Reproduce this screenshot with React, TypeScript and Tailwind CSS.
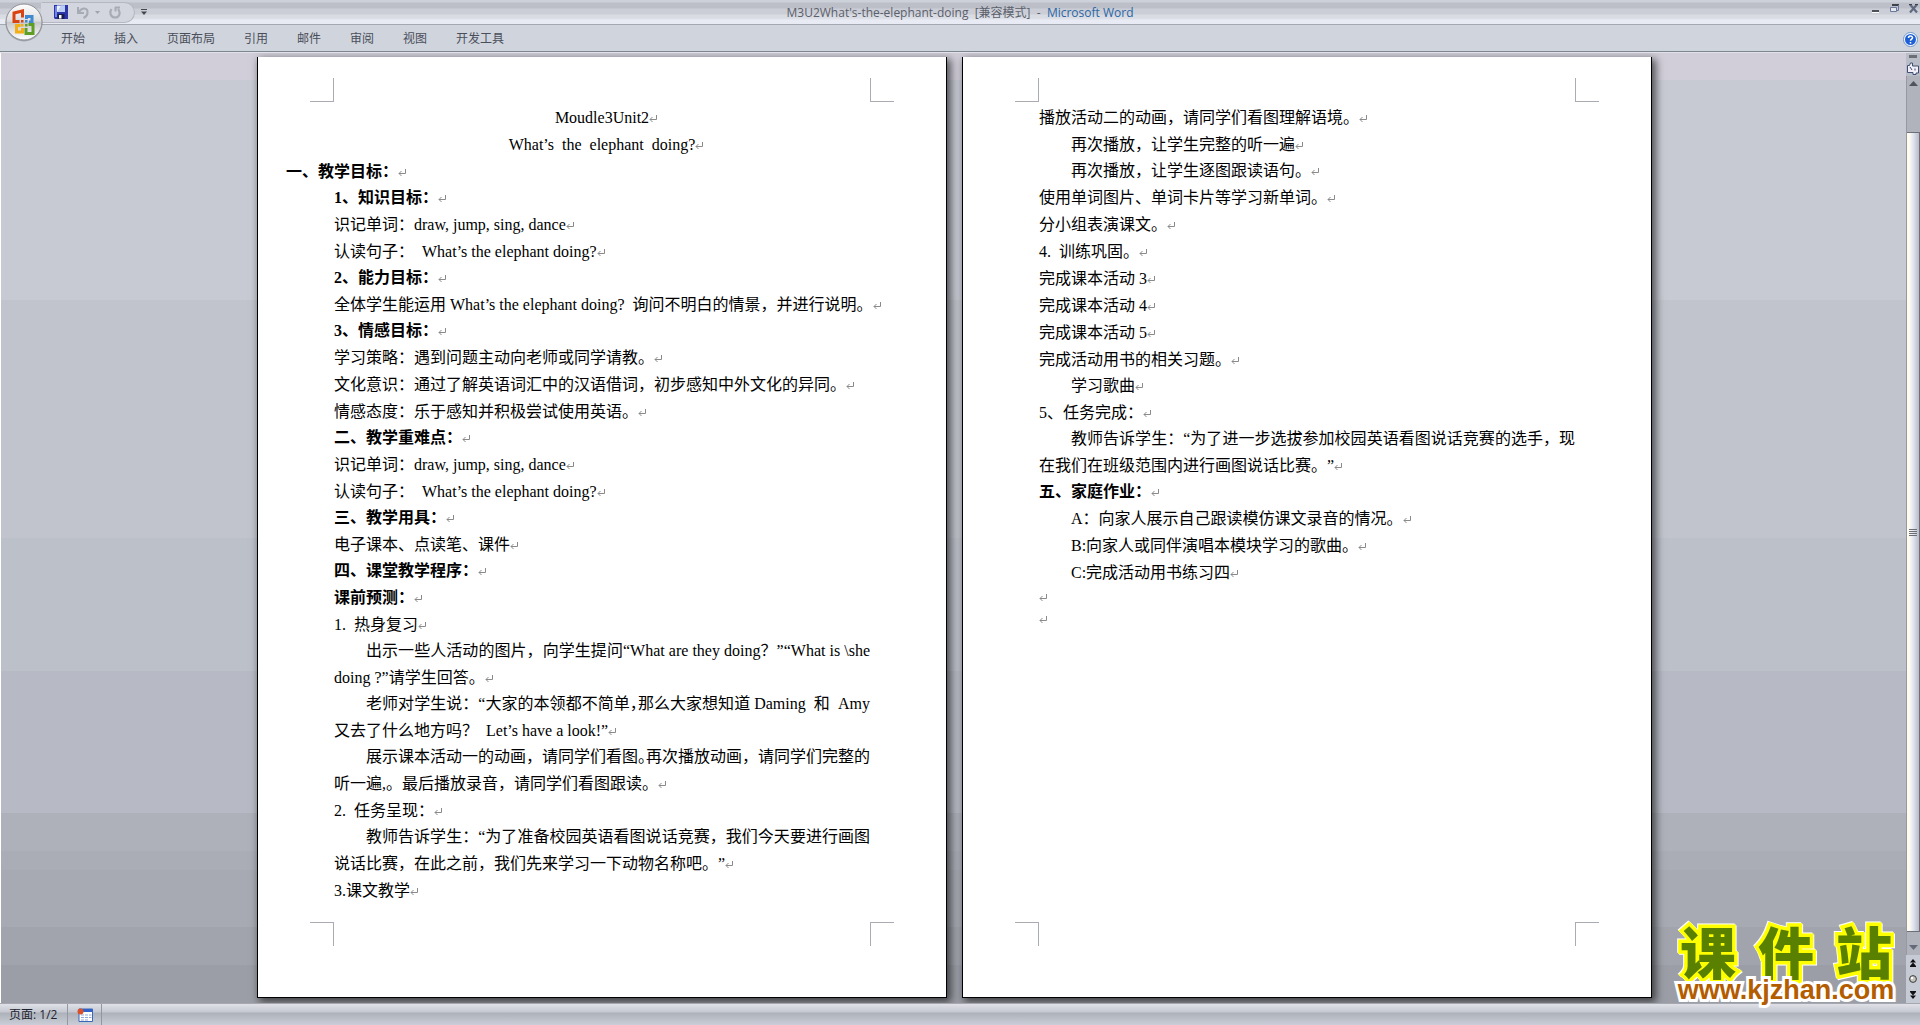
import { ReactNode } from 'react'

type Line = {
  text: ReactNode
  kind?: 'title' | 'lead' | 'heading' | 'subheading' | 'indent' | 'item' | 'blank'
  justify?: boolean
  mark?: boolean
}

const TABS = ['开始', '插入', '页面布局', '引用', '邮件', '审阅', '视图', '开发工具']

const PAGE_ONE: Line[] = [
  { text: 'Moudle3Unit2', kind: 'title' },
  { text: 'What’s  the  elephant  doing?', kind: 'title' },
  { text: '一、教学目标：', kind: 'lead' },
  { text: '1、知识目标：', kind: 'heading' },
  { text: '识记单词：draw, jump, sing, dance' },
  { text: '认读句子：  What’s the elephant doing?' },
  { text: '2、能力目标：', kind: 'heading' },
  { text: '全体学生能运用 What’s the elephant doing?  询问不明白的情景，并进行说明。' },
  { text: '3、情感目标：', kind: 'heading' },
  { text: '学习策略：遇到问题主动向老师或同学请教。' },
  { text: '文化意识：通过了解英语词汇中的汉语借词，初步感知中外文化的异同。' },
  { text: '情感态度：乐于感知并积极尝试使用英语。' },
  { text: '二、教学重难点：', kind: 'heading' },
  { text: '识记单词：draw, jump, sing, dance' },
  { text: '认读句子：  What’s the elephant doing?' },
  { text: '三、教学用具：', kind: 'heading' },
  { text: '电子课本、点读笔、课件' },
  { text: '四、课堂教学程序：', kind: 'heading' },
  { text: '课前预测：', kind: 'subheading' },
  { text: '1.  热身复习' },
  {
    text: '出示一些人活动的图片，向学生提问“What are they doing？”“What is \\she',
    kind: 'indent',
    justify: true,
    mark: false,
  },
  { text: 'doing ?”请学生回答。' },
  {
    text: (
      <>
        老师对学生说：“大家的本领都不简单<HalfWidth>，</HalfWidth>那么大家想知道 Daming  和  Amy
      </>
    ),
    kind: 'indent',
    justify: true,
    mark: false,
  },
  { text: '又去了什么地方吗？  Let’s have a look!”' },
  {
    text: (
      <>
        展示课本活动一的动画，请同学们看图<HalfWidth>。</HalfWidth>再次播放动画，请同学们完整的
      </>
    ),
    kind: 'indent',
    justify: true,
    mark: false,
  },
  { text: '听一遍,。最后播放录音，请同学们看图跟读。' },
  { text: '2.  任务呈现：' },
  {
    text: '教师告诉学生：“为了准备校园英语看图说话竞赛，我们今天要进行画图',
    kind: 'indent',
    justify: true,
    mark: false,
  },
  { text: '说话比赛，在此之前，我们先来学习一下动物名称吧。”' },
  { text: '3.课文教学' },
]

const PAGE_TWO: Line[] = [
  { text: '播放活动二的动画，请同学们看图理解语境。' },
  { text: '再次播放，让学生完整的听一遍', kind: 'item' },
  { text: '再次播放，让学生逐图跟读语句。', kind: 'indent' },
  { text: '使用单词图片、单词卡片等学习新单词。' },
  { text: '分小组表演课文。' },
  { text: '4.  训练巩固。' },
  { text: '完成课本活动 3' },
  { text: '完成课本活动 4' },
  { text: '完成课本活动 5' },
  { text: '完成活动用书的相关习题。' },
  { text: '学习歌曲', kind: 'indent' },
  { text: '5、任务完成：' },
  {
    text: '教师告诉学生：“为了进一步选拔参加校园英语看图说话竞赛的选手，现',
    kind: 'indent',
    justify: true,
    mark: false,
  },
  { text: '在我们在班级范围内进行画图说话比赛。”' },
  { text: '五、家庭作业：', kind: 'heading' },
  { text: 'A：向家人展示自己跟读模仿课文录音的情况。', kind: 'item' },
  { text: 'B:向家人或同伴演唱本模块学习的歌曲。', kind: 'item' },
  { text: 'C:完成活动用书练习四', kind: 'item' },
  { text: '', kind: 'blank' },
  { text: '', kind: 'blank' },
]

const LINE_STYLES = {
  body: 'leading-[27px]',
  title: 'text-center leading-[27px]',
  lead: '-ml-12 font-bold leading-[27px]',
  heading: 'font-bold leading-[26px]',
  subheading: 'font-bold leading-[27px]',
  indent: 'pl-8 leading-[26px]',
  item: 'pl-8 leading-[27px]',
  blank: 'leading-[22px]',
}

function HalfWidth({ children }: { children: ReactNode }) {
  return <span className="[font-feature-settings:'halt']">{children}</span>
}

function ReturnMark() {
  return (
    <svg className="-mr-2 inline-block align-baseline" width="8" height="8" viewBox="0 0 8 8" fill="none" stroke="#8a8a8a" aria-hidden="true">
      <path d="M7.5 0v4.5H1" />
      <path d="M3.5 2L1 4.5L3.5 7" />
    </svg>
  )
}

function Corner({ className }: { className: string }) {
  return <div className={`size-6 border-[#a9acb1] ${className}`} />
}

function Page({ lines }: { lines: Line[] }) {
  return (
    <article className="flex w-[690px] shrink-0 flex-col border border-t-0 border-black bg-white px-[52px] pt-[21px] pb-[51px] shadow-[3px_3px_8px_1px_rgba(0,0,0,0.6)]">
      <div className="flex justify-between">
        <Corner className="border-r border-b" />
        <Corner className="border-b border-l" />
      </div>
      <div className="flex-1 px-6 pt-0.5">
        {lines.map((line, i) => (
          <p key={i} className={`whitespace-pre ${LINE_STYLES[line.kind ?? 'body']} ${line.justify ? '[text-align-last:justify]' : ''}`}>
            {line.text}
            {line.mark !== false && <ReturnMark />}
          </p>
        ))}
      </div>
      <div className="flex justify-between">
        <Corner className="border-t border-r" />
        <Corner className="border-t border-l" />
      </div>
    </article>
  )
}

function OfficeOrb() {
  return (
    <svg width="40" height="40" viewBox="0 0 40 40" aria-hidden="true">
      <defs>
        <linearGradient id="orb" x1="0" y1="0" x2="0" y2="1">
          <stop offset="0" stopColor="#ffffff" />
          <stop offset="0.48" stopColor="#dcdcde" />
          <stop offset="0.5" stopColor="#c6c7cb" />
          <stop offset="1" stopColor="#ffffff" />
        </linearGradient>
      </defs>
      <circle cx="20" cy="21" r="18.5" fill="#80838a" opacity="0.6" />
      <circle cx="20" cy="20" r="18" fill="url(#orb)" stroke="#8c8f96" />
      <g fill="none" strokeWidth="3">
        <path d="M15.5 19.5h-5.500v-8.500l8.500-2v6.500" stroke="#d8430f" />
        <path d="M22.500 17v-2.500h5.500v5.500h-3" stroke="#3d8ad0" />
        <path d="M16.500 23.500h-4v6.500h6v-4" stroke="#f2ae15" />
        <path d="M22 26v5.500h7v-9h-4.500" stroke="#5f9e25" />
      </g>
      <g>
        <rect x="17" y="18" width="2.500" height="2.500" fill="#d8430f" />
        <rect x="21" y="18" width="2.500" height="2.500" fill="#3d8ad0" />
        <rect x="17" y="22" width="2.500" height="2.500" fill="#f2ae15" />
        <rect x="21" y="22" width="2.500" height="2.500" fill="#5f9e25" />
      </g>
    </svg>
  )
}

function QuickAccess() {
  return (
    <div className="flex h-[22px] items-center pl-[41px]">
      <div className="flex h-[21px] items-center rounded-r-full border border-[#b4b7c0] border-l-transparent bg-[#d3d6de] pr-[13px] pl-3">
        <button type="button" aria-label="保存">
          <svg className="block" width="14" height="14" viewBox="0 0 14 14">
            <path d="M0 0h14v14H1L0 13z" fill="#2b35a8" />
            <path d="M1 1h2v11H1z" fill="#6f86e6" />
            <path d="M3 0.500h8v6.500H3z" fill="#eef3ff" />
            <path d="M7 0.500h4v6.500L3 7z" fill="#b9cdf5" />
            <path d="M3.500 9h7v5h-7z" fill="#181c50" />
            <path d="M5 10h2.500v3.500H5z" fill="#fff" />
          </svg>
        </button>
        <button type="button" aria-label="撤消" className="ml-[9px]">
          <svg className="block" width="12" height="13" viewBox="0 0 12 13" fill="none" stroke="#a7abb5" strokeWidth="2.200">
            <path d="M1 1v6h6" strokeWidth="2" />
            <path d="M2 6C5 1 11 1.500 10.500 6.500C10.500 9 8.500 11 6.500 12" />
          </svg>
        </button>
        <button type="button" aria-label="撤消选项" className="ml-1.5">
          <svg className="block" width="5" height="3" viewBox="0 0 5 3">
            <path d="M0 0h5L2.500 3z" fill="#9ea2ab" />
          </svg>
        </button>
        <button type="button" aria-label="重复" className="ml-[9px]">
          <svg className="block" width="12" height="13" viewBox="0 0 12 13" fill="none" stroke="#a7abb5" strokeWidth="2.200">
            <path d="M2.500 3C0 7 2 11.500 6 11.500C10.500 11.500 12 6.500 9 3" />
            <path d="M6.500 1v4.500M6 1.500h5" strokeWidth="2" />
          </svg>
        </button>
      </div>
      <button type="button" aria-label="自定义快速访问工具栏" className="ml-1.5">
        <svg className="block" width="6" height="6" viewBox="0 0 6 6">
          <path d="M0 0h6v1H0zM0 2.500h6L3 6z" fill="#44474e" />
        </svg>
      </button>
    </div>
  )
}

function WindowButtons() {
  return (
    <div className="flex items-center justify-end gap-2.5 pr-0.5 pb-2">
      <button type="button" aria-label="最小化">
        <svg className="block" width="8" height="9" viewBox="0 0 8 9">
          <path d="M0 6h7v2H0z" fill="#4d5059" />
          <path d="M0 8h7v1H0z" fill="#fff" />
        </svg>
      </button>
      <button type="button" aria-label="还原">
        <svg className="block" width="9" height="9" viewBox="0 0 9 9" fill="none" stroke="#68779a">
          <path d="M2 1h7" stroke="#3e4149" strokeWidth="2" />
          <path d="M8.500 1v5.500H7" />
          <path d="M0.500 3.500h6v4h-6z" fill="#e4e7ee" />
        </svg>
      </button>
      <button type="button" aria-label="关闭">
        <svg className="block" width="9" height="9" viewBox="0 0 9 9" fill="none" stroke="#5f6a80" strokeWidth="2.200">
          <path d="M1 0.500L8 8.500M8 0.500L1 8.500" />
          <path d="M0 0.500h3M6 0.500h3" stroke="#3e4149" strokeWidth="1" />
        </svg>
      </button>
    </div>
  )
}

function ScrollBar() {
  return (
    <aside className="flex w-3.5 shrink-0 flex-col bg-[#b9bdc7]">
      <div className="mx-auto mt-0.5 h-[3px] w-2 bg-[#6b6e75]" />
      <button type="button" aria-label="标尺" className="mt-0.5 flex h-4 items-center justify-center">
        <svg className="block" width="12" height="13" viewBox="0 0 12 13" fill="#f3eff8" stroke="#3d4f73">
          <path d="M0.500 3.500h2l1-2.500h2v3h6v7h-2.500v1.500h-3V10.500h-5.500z" />
          <path d="M3 5l2 3M8 6.500v2" />
        </svg>
      </button>
      <div className="flex flex-1 flex-col border-l border-[#9599a2] bg-[#b0b3bb]">
        <button type="button" aria-label="向上滚动" className="flex h-14 justify-center pt-[5px]">
          <svg width="9" height="5" viewBox="0 0 9 5">
            <path d="M0 5L4.500 0L9 5z" fill="#4e535e" />
          </svg>
        </button>
        <div className="flex flex-1 flex-col items-center justify-center gap-px border border-l-0 border-[#6d7079] bg-linear-to-r from-[#fffbee] from-20% via-[#e2e7f2] via-50% to-[#b9bcc8]">
          <span className="h-px w-2 bg-[#6b6e75]" />
          <span className="h-px w-2 bg-[#6b6e75]" />
          <span className="h-px w-2 bg-[#6b6e75]" />
          <span className="h-px w-2 bg-[#6b6e75]" />
        </div>
        <button type="button" aria-label="向下滚动" className="flex h-[23px] items-center justify-center pt-2">
          <svg width="9" height="5" viewBox="0 0 9 5">
            <path d="M0 0h9L4.500 5z" fill="#636b7b" />
          </svg>
        </button>
      </div>
      <div className="flex h-12 flex-col items-center justify-between bg-[#c6cad4] py-1">
        <button type="button" aria-label="前一页">
          <svg className="block" width="6" height="8" viewBox="0 0 6 8">
            <path d="M0 3.500L3 0L6 3.500zM0 7L3 3.500L6 7zM0 7h6v1H0z" fill="#111" />
          </svg>
        </button>
        <button type="button" aria-label="选择浏览对象">
          <svg className="block" width="8" height="8" viewBox="0 0 8 8">
            <circle cx="4" cy="4" r="3.400" fill="#c3c4bd" stroke="#3b3b3b" />
            <circle cx="3" cy="3" r="1.200" fill="#fff" />
          </svg>
        </button>
        <button type="button" aria-label="下一页">
          <svg className="block" width="6" height="8" viewBox="0 0 6 8">
            <path d="M0 0h6v1H0zM0 1h6L3 4.500zM0 4.500h6L3 8z" fill="#111" />
          </svg>
        </button>
      </div>
    </aside>
  )
}

function Watermark() {
  return (
    <div className="absolute right-5 bottom-[21px] w-[228px] font-bold">
      <div className="flex justify-between px-2 font-['Noto_Sans_CJK_SC',sans-serif] text-[56px] leading-[52px] font-black text-[#5a8000] [-webkit-text-stroke:7px_#ffff00] [paint-order:stroke_fill] [filter:drop-shadow(1px_1px_0_#fff)_drop-shadow(-1px_-1px_0_#fff)]">
        <span>课</span>
        <span>件</span>
        <span>站</span>
      </div>
      <a
        href="http://www.kjzhan.com"
        className="relative block text-center font-['Liberation_Sans',sans-serif] text-[27px] leading-7 text-[#b35c00] [-webkit-text-stroke:6px_#ffffff] [paint-order:stroke_fill]"
      >
        www.kjzhan.com
      </a>
    </div>
  )
}

export default function App() {
  return (
    <div lang="zh-CN" className="relative flex h-screen flex-col overflow-hidden bg-[#d1ced9] font-['Open_Sans','Noto_Sans_CJK_SC',sans-serif] text-xs text-[#4a4e5a]">
      <header>
        <div className="relative grid h-[25px] grid-cols-[1fr_auto_1fr] items-center border-b border-[#a3a8b1] bg-[linear-gradient(#cdd1da_0_2px,#bcbfc8_3px_8px,#cbced6_9px_14px,#d9dce3_15px_18px,#e8ebf3_20px)]">
          <QuickAccess />
          <h1 className="pt-0.5 whitespace-pre text-[#5b5f6b]">
            M3U2What's-the-elephant-doing  [兼容模式]  -  <span className="text-[#2a66a5]">Microsoft Word</span>
          </h1>
          <WindowButtons />
          <button type="button" aria-label="Office 按钮" className="absolute top-0.5 left-1">
            <OfficeOrb />
          </button>
        </div>
        <nav className="flex h-[27px] items-center gap-[29px] border-b border-[#80868f] bg-[#d0d4dd] pt-0.5 pr-0.5 pl-[61px]">
          {TABS.map((tab) => (
            <button key={tab} type="button">
              {tab}
            </button>
          ))}
          <button type="button" aria-label="帮助" className="ml-auto">
            <svg className="block" width="15" height="15" viewBox="0 0 15 15">
              <circle cx="7.500" cy="7.500" r="7" fill="#fff" stroke="#6f93c9" />
              <circle cx="7.500" cy="7.500" r="5.500" fill="#1d5fd6" />
              <path d="M5.500 6C5.500 3.500 9.500 3.500 9.500 5.800C9.500 7.200 7.500 7.200 7.500 8.800M7.500 10v1.500" fill="none" stroke="#fff" strokeWidth="1.500" />
            </svg>
          </button>
        </nav>
      </header>

      <div className="flex min-h-0 flex-1 border-t border-[#dfe3e8]">
        <main className="flex min-w-0 flex-1 justify-center gap-[15px] overflow-hidden border-l border-white bg-[linear-gradient(#d1ced9_0_27px,#c8cad3_27px_26%,#c2c4cd_26%_51%,#bcc0c9_51%_65%,#b7bac4_65%_80%,#aeb1ba_80%_84%,#aaadb6_84%_86%,#a7aab2_86%_92%,#a1a4ac_92%_96%,#9b9ea6_96%)] pt-1 pb-[5px] pl-0.5 font-['Liberation_Serif','Noto_Sans_CJK_SC',serif] text-base text-black [text-spacing-trim:space-all]">
          <Page lines={PAGE_ONE} />
          <Page lines={PAGE_TWO} />
        </main>
        <ScrollBar />
      </div>

      <footer className="flex h-[22px] shrink-0 items-stretch border-t border-[#a6a8b0] bg-[linear-gradient(#e0e1e8,#c5c8d1_8px,#adb1ba_9px,#cbced8)] text-[#1d2230]">
        <span className="flex w-[67px] items-center pl-[9px]">页面: 1/2</span>
        <button type="button" aria-label="宏录制" className="flex w-[35px] items-center justify-center border-x border-[#93979f]">
          <svg width="16" height="14" viewBox="0 0 16 14">
            <path d="M2 1h13.500v12.500H2z" fill="#fff" stroke="#3c66b8" />
            <path d="M2 1h13.500v3H2z" fill="#2f62c9" />
            <path d="M4 7h3M8 7h3M12 7h2.500M4 9.500h3M8 9.500h3M12 9.500h2.500M4 12h3M8 12h3" stroke="#8da9dc" />
            <circle cx="3.500" cy="3.500" r="3" fill="#d9502a" />
          </svg>
        </button>
      </footer>

      <Watermark />
    </div>
  )
}
